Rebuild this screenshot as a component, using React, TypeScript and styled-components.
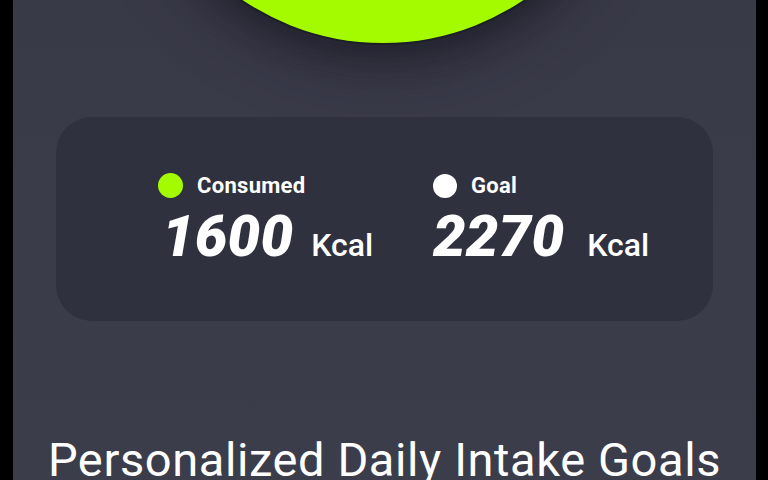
import React from "react";
import styled, { createGlobalStyle } from "styled-components";

const Global = createGlobalStyle`
  html, body { margin: 0; padding: 0; background: #000; height: 100%; }
  #root { height: 100%; }
  * { box-sizing: border-box; }
`;

const Screen = styled.div`
  height: 480px;
  width: 768px;
  background: #000;
  display: flex;
  padding-left: 13px;
  overflow: hidden;
`;

const Panel = styled.main`
  width: 743px;
  height: 480px;
  background: linear-gradient(180deg, #393a47 0%, #3b3c4a 50%, #3c3d4b 100%);
  display: flex;
  flex-direction: column;
  align-items: center;
  overflow: hidden;
  font-family: Roboto, "Liberation Sans", sans-serif;
  color: #fff;
`;

const Ring = styled.div`
  flex: none;
  width: 506px;
  height: 506px;
  margin-top: -461px;
  margin-left: -3px;
  border-radius: 50%;
  background: #a4fb00;
  border: 2px solid #1c2024;
  box-shadow: 0 14px 30px rgba(20, 20, 30, 0.45), 0 30px 60px rgba(20, 20, 30, 0.25);
`;

const Card = styled.section`
  flex: none;
  margin-top: 72px;
  width: 657px;
  height: 204px;
  border-radius: 36px;
  background: #30313e;
  display: grid;
  grid-template-columns: 275px 275px;
  align-content: center;
  padding-left: 102px;
`;

const Stat = styled.div`
  display: flex;
  flex-direction: column;
  gap: 9px;
`;

const Label = styled.div`
  display: flex;
  align-items: center;
  gap: 14px;
  height: 25px;
  font-size: 22px;
  font-weight: 700;
  letter-spacing: 0.3px;
  line-height: 1;
`;

const Dot = styled.span<{ $color: string; $size: number }>`
  width: ${(p) => p.$size}px;
  height: ${(p) => p.$size}px;
  border-radius: 50%;
  background: ${(p) => p.$color};
  flex: none;
`;

const ValueRow = styled.div<{ $inset: number }>`
  display: flex;
  align-items: baseline;
  line-height: 1;
  padding-left: ${(p) => p.$inset}px;
`;

const Number = styled.span`
  font-size: 58px;
  font-weight: 900;
  font-style: italic;
  letter-spacing: 0.2px;
`;

const Unit = styled.span<{ $gap: number }>`
  font-size: 32px;
  font-weight: 500;
  margin-left: ${(p) => p.$gap}px;
`;

const Heading = styled.h1`
  margin: 111px 0 0;
  font-size: 47px;
  font-weight: 400;
  line-height: 1.2;
  letter-spacing: 0.6px;
  white-space: nowrap;
  text-align: center;
`;

export default function App() {
  return (
    <>
      <Global />
      <Screen>
        <Panel>
          <Ring />
          <Card>
            <Stat>
              <Label>
                <Dot $color="#a4fb00" $size={25} />
                Consumed
              </Label>
              <ValueRow $inset={4}>
                <Number>1600</Number>
                <Unit $gap={18}>Kcal</Unit>
              </ValueRow>
            </Stat>
            <Stat>
              <Label>
                <Dot $color="#ffffff" $size={24} />
                Goal
              </Label>
              <ValueRow $inset={0}>
                <Number>2270</Number>
                <Unit $gap={23}>Kcal</Unit>
              </ValueRow>
            </Stat>
          </Card>
          <Heading>Personalized Daily Intake Goals</Heading>
        </Panel>
      </Screen>
    </>
  );
}
